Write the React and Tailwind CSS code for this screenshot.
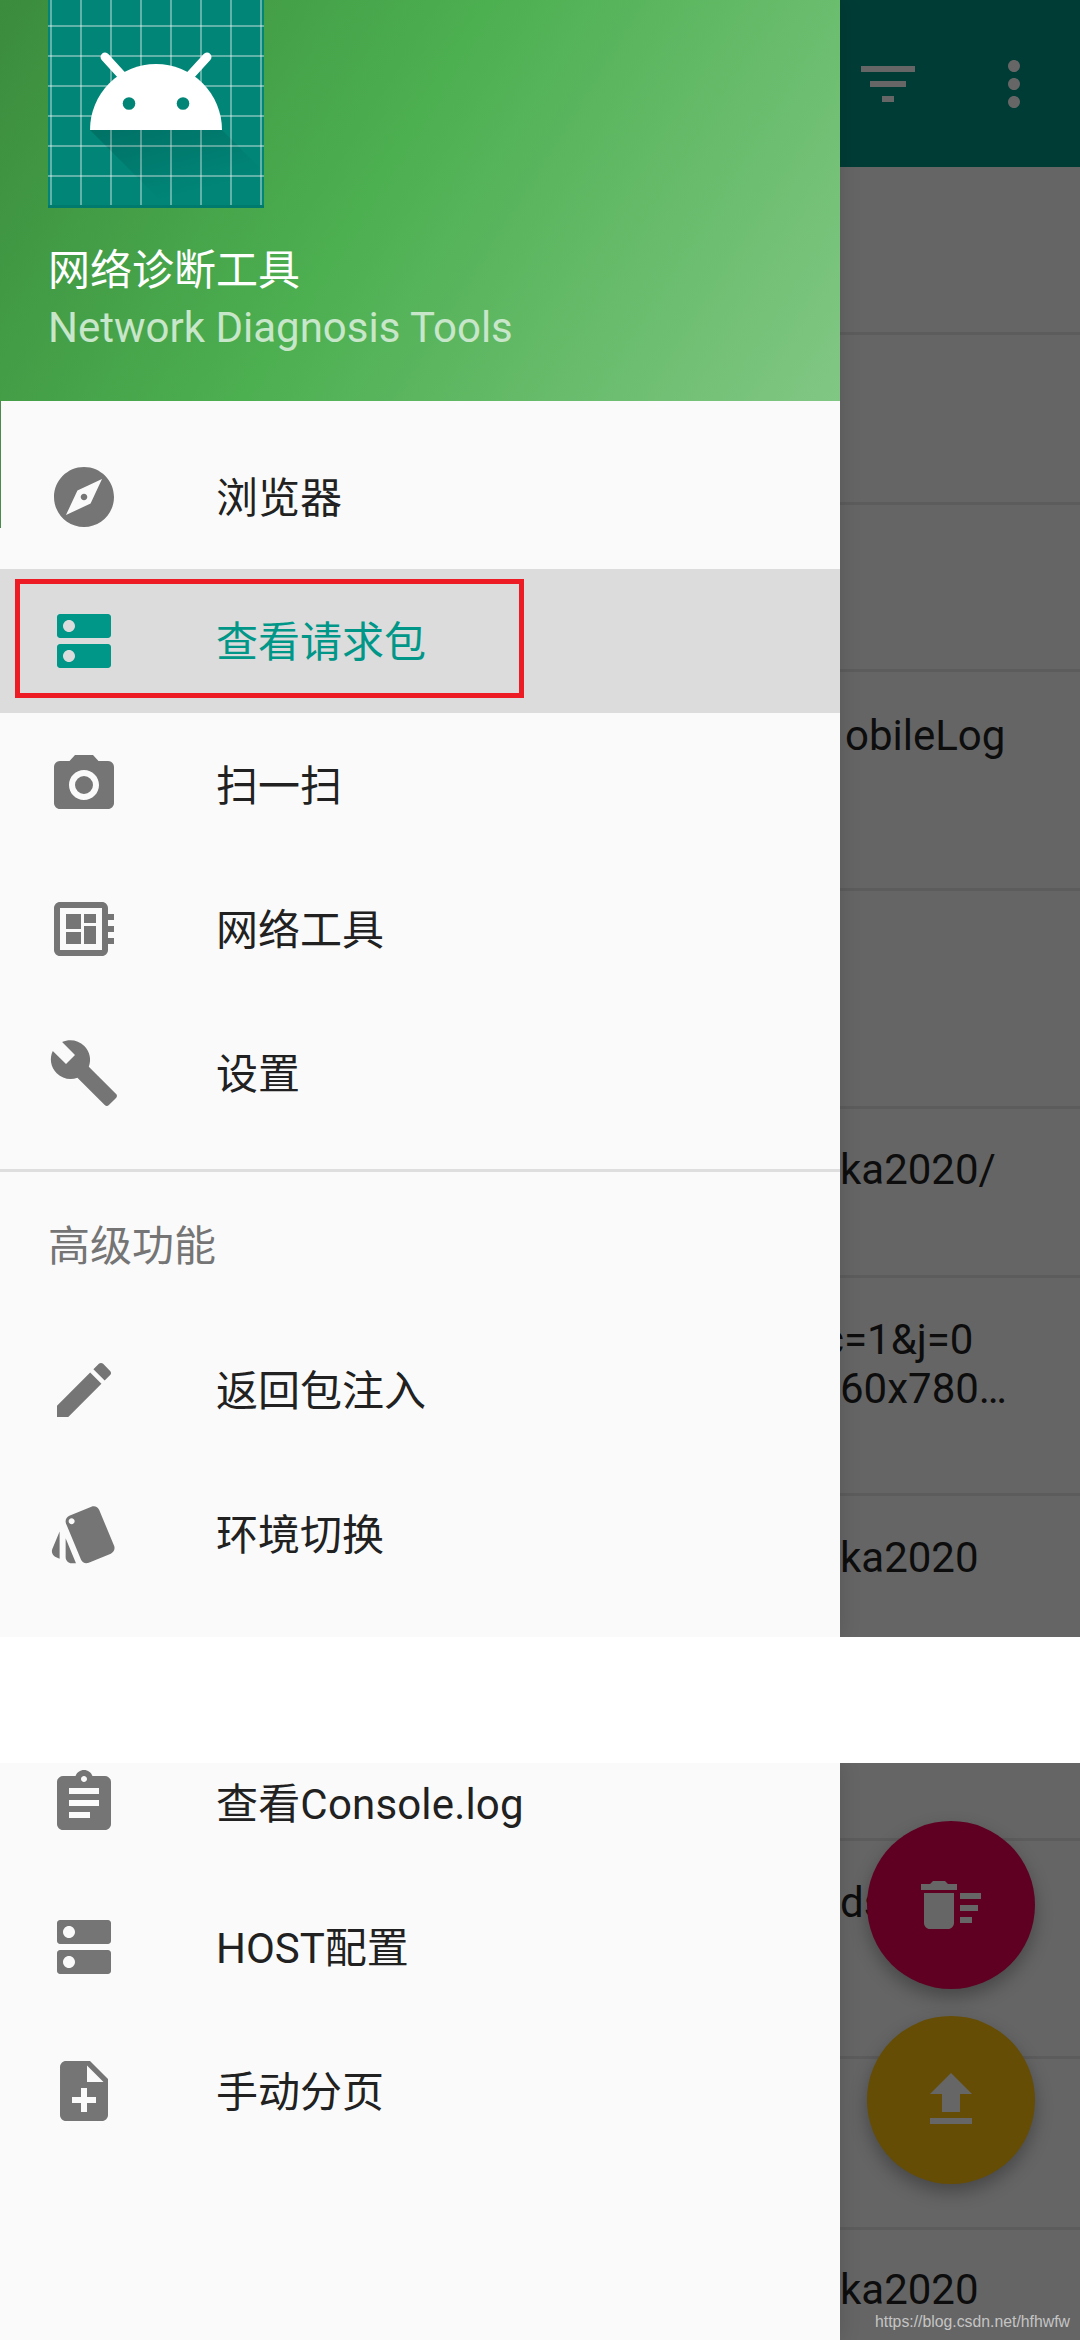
const P = {
  explore: "M12 10.9c-.61 0-1.1.49-1.1 1.1s.49 1.1 1.1 1.1c.61 0 1.1-.49 1.1-1.1s-.49-1.1-1.1-1.1zM12 2C6.48 2 2 6.48 2 12s4.48 10 10 10 10-4.48 10-10S17.52 2 12 2zm2.19 12.19L6 18l3.81-8.19L18 6l-3.81 8.19z",
  dns: "M20 13H4c-.55 0-1 .45-1 1v6c0 .55.45 1 1 1h16c.55 0 1-.45 1-1v-6c0-.55-.45-1-1-1zM7 19c-1.1 0-2-.9-2-2s.9-2 2-2 2 .9 2 2-.9 2-2 2zM20 3H4c-.55 0-1 .45-1 1v6c0 .55.45 1 1 1h16c.55 0 1-.45 1-1V4c0-.55-.45-1-1-1zM7 9c-1.1 0-2-.9-2-2s.9-2 2-2 2 .9 2 2-.9 2-2 2z",
  camera: "M9 12a3 3 0 1 0 6 0a3 3 0 1 0 -6 0zM9 2L7.17 4H4c-1.1 0-2 .9-2 2v12c0 1.1.9 2 2 2h16c1.1 0 2-.9 2-2V6c0-1.1-.9-2-2-2h-3.17L15 2H9zm3 15c-2.76 0-5-2.24-5-5s2.24-5 5-5 5 2.24 5 5-2.24 5-5 5z",
  board: "M22 9V7h-2V5c0-1.1-.9-2-2-2H4c-1.1 0-2 .9-2 2v14c0 1.1.9 2 2 2h14c1.1 0 2-.9 2-2v-2h2v-2h-2v-2h2v-2h-2V9h2zm-4 10H4V5h14v14zM6 13h5v4H6zm6-6h4v3h-4zM6 7h5v5H6zm6 4h4v6h-4z",
  build: "M22.7 19l-9.1-9.1c.9-2.3.4-5-1.5-6.9-2-2-5-2.4-7.4-1.3L9 6 6 9 1.6 4.7C.4 7.1.9 10.1 2.9 12.1c1.9 1.9 4.6 2.4 6.9 1.5l9.1 9.1c.4.4 1 .4 1.4 0l2.3-2.3c.5-.4.5-1.1.1-1.4z",
  edit: "M3 17.25V21h3.75L17.81 9.94l-3.75-3.75L3 17.25zM20.71 7.04c.39-.39.39-1.02 0-1.41l-2.34-2.34c-.39-.39-1.02-.39-1.41 0l-1.83 1.83 3.75 3.75 1.83-1.83z",
  style: "M2.53 19.65l1.34.56v-9.03l-2.43 5.86c-.41 1.02.08 2.19 1.09 2.61zm19.5-3.7L17.07 3.98c-.31-.75-1.04-1.21-1.81-1.23-.26 0-.53.04-.79.15L7.1 5.95c-.75.31-1.21 1.03-1.23 1.8-.01.27.04.54.15.8l4.96 11.97c.31.76 1.05 1.22 1.83 1.23.26 0 .52-.05.77-.15l7.36-3.05c1.02-.42 1.51-1.59 1.09-2.6zM7.88 8.75c-.55 0-1-.45-1-1s.45-1 1-1 1 .45 1 1-.45 1-1 1zm-2 11c0 1.1.9 2 2 2h1.45l-3.45-8.34v6.34z",
  assignment: "M19 3h-4.18C14.4 1.84 13.3 1 12 1c-1.3 0-2.4.84-2.82 2H5c-1.1 0-2 .9-2 2v14c0 1.1.9 2 2 2h14c1.1 0 2-.9 2-2V5c0-1.1-.9-2-2-2zm-7 0c.55 0 1 .45 1 1s-.45 1-1 1-1-.45-1-1 .45-1 1-1zm2 14H7v-2h7v2zm3-4H7v-2h10v2zm0-4H7V7h10v2z",
  noteAdd: "M14 2H6c-1.1 0-1.99.9-1.99 2L4 20c0 1.1.89 2 1.99 2H18c1.1 0 2-.9 2-2V8l-6-6zm2 14h-3v3h-2v-3H8v-2h3v-3h2v3h3v2zm-3-7V3.5L18.5 9H13z",
  filter: "M10 18h4v-2h-4v2zM3 6v2h18V6H3zm3 7h12v-2H6v2z",
  more: "M12 8c1.1 0 2-.9 2-2s-.9-2-2-2-2 .9-2 2 .9 2 2 2zm0 2c-1.1 0-2 .9-2 2s.9 2 2 2 2-.9 2-2-.9-2-2-2zm0 6c-1.1 0-2 .9-2 2s.9 2 2 2 2-.9 2-2-.9-2-2-2z",
  sweep: "M15 16h4v2h-4zm0-8h7v2h-7zm0 4h6v2h-6zM3 18c0 1.1.9 2 2 2h6c1.1 0 2-.9 2-2V8H3v10zM14 5h-3l-1-1H6L5 5H2v2h12z",
  upload: "M9 16h6v-6h4l-7-7-7 7h4zm-4 2h14v2H5z",
};

function Icon({ d, className }) {
  return (
    <svg viewBox="0 0 24 24" className={`w-[72px] h-[72px] shrink-0 ${className}`} fill="currentColor">
      <path d={d} />
    </svg>
  );
}

function Logo() {
  const hs = [26, 56, 86, 116, 146, 176];
  const vs = [3, 33, 63, 93, 123, 153, 183, 213];
  return (
    <svg viewBox="0 0 216 208" className="w-[216px] h-[208px] block">
      <defs>
        <linearGradient id="sh" x1="0" y1="0" x2="0.6" y2="1">
          <stop offset="0" stopColor="#000" stopOpacity="0.15" />
          <stop offset="0.85" stopColor="#000" stopOpacity="0" />
        </linearGradient>
      </defs>
      <rect width="216" height="208" fill="#008577" />
      {hs.map((y) => (
        <rect key={y} x="0" y={y - 1} width="216" height="2" fill="#fff" fillOpacity="0.38" />
      ))}
      {vs.map((x) => (
        <rect key={x} x={x - 1} y="0" width="2" height="208" fill="#fff" fillOpacity="0.38" />
      ))}
      <rect x="0" y="205" width="216" height="3" fill="#007a6d" />
      <polygon points="42,130 174,130 216,172 216,208 120,208" fill="url(#sh)" />
      <line x1="57" y1="57" x2="78" y2="80" stroke="#fff" strokeWidth="9" strokeLinecap="round" />
      <line x1="159" y1="57" x2="138" y2="80" stroke="#fff" strokeWidth="9" strokeLinecap="round" />
      <path d="M42 130A66 66 0 0 1 174 130Z" fill="#fff" />
      <circle cx="81" cy="103.5" r="6.3" fill="#008577" />
      <circle cx="135" cy="103.5" r="6.3" fill="#008577" />
    </svg>
  );
}

function Item({ icon, label }) {
  return (
    <div className="h-[144px] flex items-center pl-[48px]">
      <Icon d={icon} className="text-[#757575]" />
      <span className="ml-[96px] pt-[3px] text-[42px] text-[#212121] whitespace-nowrap">{label}</span>
    </div>
  );
}

function ListRow({ h, pt = "pt-[37px]", children }) {
  return (
    <div className={`${h} ${pt} border-b-[3px] border-[#5c5c5c] text-[42px] leading-[50px] text-[#0d0d0d] whitespace-nowrap`}>
      {children}
    </div>
  );
}

export default function App() {
  return (
    <div className="relative w-[1080px] h-[2340px] overflow-hidden bg-white font-[Roboto,'Noto_Sans_CJK_SC',sans-serif]">
      {/* upper part of the capture */}
      <div className="flex h-[1637px]">
        <div className="relative z-10 w-[840px] shrink-0 bg-[#fafafa] shadow-[0_0_20px_rgba(0,0,0,0.14)]">
          <div className="h-[401px] bg-[linear-gradient(122deg,#3b8c3d_0%,#4caf50_45%,#81c784_100%)]">
            <div className="ml-[48px] w-[216px]">
              <Logo />
            </div>
            <div className="ml-[48px] mt-[34px] text-[42px] leading-[57px]">
              <div className="text-white">网络诊断工具</div>
              <div className="text-[#c8e6c9] whitespace-nowrap">Network Diagnosis Tools</div>
            </div>
          </div>
          <div className="absolute left-0 top-[401px] w-px h-[127px] bg-[#4a8a4a]" />
          <div className="pt-[24px]">
            <Item icon={P.explore} label="浏览器" />
            <div className="relative h-[144px] flex items-center pl-[48px] bg-[#dcdcdc]">
              <Icon d={P.dns} className="text-[#009688]" />
              <span className="ml-[96px] pt-[3px] text-[42px] text-[#009688] whitespace-nowrap">查看请求包</span>
              <div className="absolute left-[15px] top-[10px] w-[509px] h-[119px] border-[5px] border-[#ed1c24]" />
            </div>
            <Item icon={P.camera} label="扫一扫" />
            <Item icon={P.board} label="网络工具" />
            <Item icon={P.build} label="设置" />
          </div>
          <div className="mt-[24px] h-[3px] bg-[#dedede]" />
          <div className="h-[146px] flex items-center pl-[48px] pt-[3px] text-[42px] text-[#757575]">高级功能</div>
          <Item icon={P.edit} label="返回包注入" />
          <Item icon={P.style} label="环境切换" />
        </div>

        <div className="flex-1 min-w-0 overflow-hidden bg-[#656565]">
          <div className="h-[167px] bg-[#003c36] flex items-center justify-end gap-[54px] pr-[30px]">
            <Icon d={P.filter} className="text-[#666666]" />
            <Icon d={P.more} className="text-[#666666]" />
          </div>
          <ListRow h="h-[168px]" />
          <ListRow h="h-[170px]" />
          <ListRow h="h-[167px]" />
          <ListRow h="h-[219px]" pt="pt-[39px]">
            <div className="pl-[5px]">obileLog</div>
          </ListRow>
          <ListRow h="h-[218px]" pt="pt-[36px]" />
          <ListRow h="h-[169px]" pt="pt-[36px]">
            <div>ka2020/</div>
          </ListRow>
          <ListRow h="h-[218px]" pt="pt-[37px]">
            <div className="-ml-[18px] leading-[49px]">c=1&amp;j=0</div>
            <div className="leading-[49px]">60x780…</div>
          </ListRow>
          <div className="pt-[37px] text-[42px] leading-[50px] text-[#0d0d0d]">ka2020</div>
        </div>
      </div>

      {/* blank band */}
      <div className="relative z-20 h-[126px] bg-white" />

      {/* lower part of the capture */}
      <div className="relative flex h-[577px]">
        <div className="relative z-10 w-[840px] shrink-0 bg-[#fafafa] shadow-[0_0_20px_rgba(0,0,0,0.14)]">
          <div className="h-[80px] flex items-center pl-[48px]">
            <Icon d={P.assignment} className="text-[#757575]" />
            <span className="ml-[96px] pt-[3px] text-[42px] tracking-[0.18px] text-[#212121] whitespace-nowrap">查看Console.log</span>
          </div>
          <div className="pt-[32px]">
            <Item icon={P.dns} label="HOST配置" />
            <Item icon={P.noteAdd} label="手动分页" />
          </div>
        </div>
        <div className="flex-1 min-w-0 overflow-hidden bg-[#656565]">
          <ListRow h="h-[78px]" pt="pt-0" />
          <ListRow h="h-[218px]">
            <div>ds</div>
          </ListRow>
          <ListRow h="h-[171px]" />
          <div className="pt-[35px] text-[42px] leading-[50px] text-[#0d0d0d]">ka2020</div>
        </div>

        <div className="absolute z-20 right-[45px] top-[58px] flex flex-col gap-[27px]">
          <div className="w-[168px] h-[168px] rounded-full bg-[#5f0022] flex items-center justify-center shadow-[0_8px_18px_rgba(0,0,0,0.3)]">
            <Icon d={P.sweep} className="text-[#666666]" />
          </div>
          <div className="w-[168px] h-[168px] rounded-full bg-[#664d05] flex items-center justify-center shadow-[0_8px_18px_rgba(0,0,0,0.3)]">
            <Icon d={P.upload} className="text-[#666666]" />
          </div>
        </div>

        <div className="absolute z-30 right-[10px] bottom-[9px] text-[15.8px] leading-[18px] text-[#c4c4c4] font-['Liberation_Sans',sans-serif] whitespace-nowrap">
          https://blog.csdn.net/hfhwfw
        </div>
      </div>
    </div>
  );
}
